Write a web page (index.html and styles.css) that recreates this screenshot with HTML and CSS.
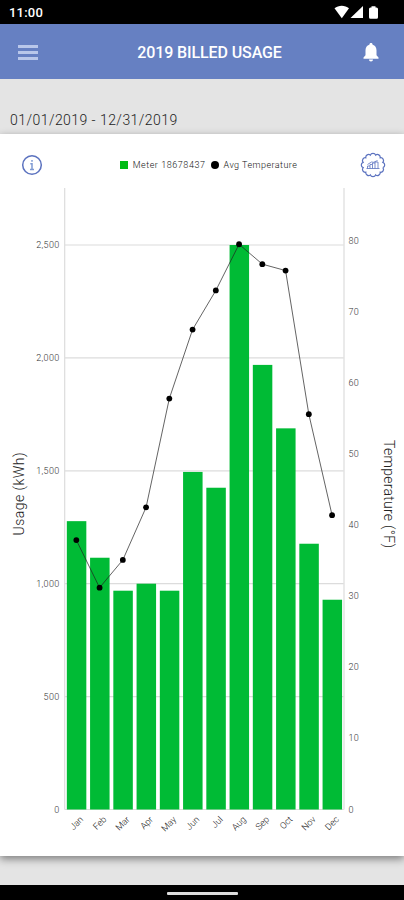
FILE: index.html
```html
<!DOCTYPE html>
<html lang="en">
<head>
  <meta charset="UTF-8" />
  <meta name="viewport" content="width=device-width, initial-scale=1.0"/>
  <title>2019 Billed Usage</title>
  <link rel="stylesheet" href="styles.css">
</head>
<body>
  <div class="status-bar">
    <span class="time">11:00</span>
    <svg class="status-icons" width="46" height="16" viewBox="0 0 46 16">
      <path d="M0.5 3.2C4.5-.2 11-.2 15 3.2L7.800 13.2Z"/>
      <path d="M29 1V13H16.5Z"/>
      <path d="M37.5 1.2h4v1.3h1q1.5 0 1.5 1.5v8.3q0 1.5-1.5 1.5h-6q-1.5 0-1.5-1.5V4q0-1.5 1.5-1.5h1Z"/>
    </svg>
  </div>

  <header class="app-bar">
    <div class="menu"><span></span><span></span><span></span></div>
    <h1>2019 BILLED USAGE</h1>
    <svg class="bell" width="16" height="19" viewBox="0 0 16 19">
      <path d="M8 0c1 0 1.6.7 1.6 1.7 2.6.7 3.9 2.8 3.9 5.6v5l2 2.2v1.3H.5v-1.3l2-2.2v-5c0-2.8 1.3-4.9 3.9-5.6C6.4.7 7 0 8 0ZM6 16.6h4c0 1.2-.8 2-2 2s-2-.8-2-2Z"/>
    </svg>
  </header>

  <div class="period">01/01/2019 - 12/31/2019</div>

  <main class="card">
    <div class="toolbar">
      <svg class="info" width="22" height="22" viewBox="0 0 22 22">
        <circle cx="11" cy="11" r="9.3"/>
        <path d="M11 6v1.7M9.3 9.8H11v5.4M9 15.5h4"/>
      </svg>
      <div class="legend">
        <span class="square"></span>
        <span class="meter">Meter 18678437</span>
        <span class="dot"></span>
        <span class="temp">Avg Temperature</span>
      </div>
      <svg class="badge" width="26" height="26" viewBox="0 0 26 26">
        <path id="badgeEdge" d=""/>
        <path class="thin" d="M7.500 16.500V14h2.500v2.500M10 14v-1.500h2.500v4M12.500 12.500V11H15v5.500M15 11v-1h3v6.500M6.500 16.500h13M7.500 12.500l4-2.500 2 .3 4-1.800"/>
      </svg>
    </div>
    <svg id="chart" class="chart" width="404" height="668" viewBox="0 0 404 668"></svg>
  </main>

  <footer class="nav-bar"><span></span></footer>

  <script>
    const chart = document.getElementById("chart");
    const months = ["Jan", "Feb", "Mar", "Apr", "May", "Jun", "Jul", "Aug", "Sep", "Oct", "Nov", "Dec"];
    const usage = [1277, 1115, 969, 1000, 969, 1495, 1425, 2500, 1969, 1688, 1177, 929];
    const temps = [37.9, 31.2, 35.1, 42.5, 57.8, 67.5, 73, 79.5, 76.7, 75.8, 55.6, 41.4];

    const left = 64.7, right = 343.7, bottom = 621.5;
    const slot = (right - left) / months.length;
    const usageY = v => bottom - v * 0.2258;
    const tempY = v => bottom - v * 7.11;
    const centerX = i => left + slot * (i + 0.5);

    function add(tag, attrs, text) {
      const el = document.createElementNS("http://www.w3.org/2000/svg", tag);
      for (const key in attrs) el.setAttribute(key, attrs[key]);
      if (text !== undefined) el.textContent = text;
      chart.appendChild(el);
    }

    // Grid and left axis
    for (let v = 0; v <= 2500; v += 500) {
      const y = usageY(v);
      add("line", { class: "grid", x1: left, x2: right, y1: y, y2: y });
      add("text", { class: "tick left", x: 59.5, y: y + 3 }, v.toLocaleString("en-US"));
    }
    add("line", { class: "grid", x1: left, x2: left, y1: 0, y2: bottom });
    add("line", { class: "grid", x1: right + 0.3, x2: right + 0.3, y1: 0, y2: bottom });

    // Right axis
    for (let v = 0; v <= 80; v += 10) {
      add("text", { class: "tick", x: 348.5, y: tempY(v) + 3 }, v);
    }

    // Bars and month names
    months.forEach((month, i) => {
      const x = centerX(i);
      const y = usageY(usage[i]);
      add("rect", { class: "bar", x: x - 9.5, y: y, width: 19.5, height: bottom - y });
      add("text", { class: "month", transform: `translate(${x + 7.5} 632) rotate(-45)` }, month);
    });

    // Temperature line
    add("polyline", { class: "line", points: temps.map((t, i) => `${centerX(i)},${tempY(t)}`).join(" ") });
    temps.forEach((t, i) => add("circle", { cx: centerX(i), cy: tempY(t), r: 2.9 }));

    // Axis titles
    add("text", { class: "axis-title", transform: "translate(24 306) rotate(-90)", textLength: 83 }, "Usage (kWh)");
    add("text", { class: "axis-title", transform: "translate(384 306) rotate(90)", textLength: 108 }, "Temperature (°F)");

    // Scalloped edge of the badge
    let edge = "";
    for (let i = 0; i <= 12; i++) {
      const a = i * Math.PI / 6 + Math.PI / 12;
      const x = (13 + 10.2 * Math.cos(a)).toFixed(2);
      const y = (13 + 10.2 * Math.sin(a)).toFixed(2);
      edge += i === 0 ? `M${x} ${y}` : `A2.8 2.8 0 0 1 ${x} ${y}`;
    }
    document.getElementById("badgeEdge").setAttribute("d", edge);
  </script>
</body>
</html>
```
FILE: styles.css
```css
* {
  box-sizing: border-box;
}
body {
  margin: 0;
  height: 900px;
  display: flex;
  flex-direction: column;
  overflow: hidden;
  background: #e4e4e4;
  font-family: Roboto, sans-serif;
}
.status-bar {
  height: 24px;
  flex: none;
  display: flex;
  justify-content: space-between;
  padding: 5px 24px 0 9px;
  background: #000;
  color: #fff;
}
.time {
  font-size: 13px;
  line-height: 16px;
  font-weight: 500;
  letter-spacing: 0.2px;
}
.status-icons {
  fill: #fff;
}
.app-bar {
  height: 55px;
  flex: none;
  display: grid;
  grid-template-columns: 60px 1fr 45px;
  align-items: center;
  padding: 1px 0 0 18px;
  background: #6680c2;
  color: #fff;
}
.menu {
  width: 20px;
  display: flex;
  flex-direction: column;
  gap: 3px;
}
.menu span {
  height: 3px;
  background: #b9c7ea;
}
h1 {
  margin: 0;
  padding: 2px 18px 0 0;
  text-align: center;
  font-size: 16px;
  font-weight: 500;
  line-height: 20px;
  letter-spacing: -0.1px;
}
.bell {
  margin-left: 4px;
  fill: #fff;
}
.period {
  height: 55px;
  flex: none;
  padding: 31px 10px 0;
  font-size: 14px;
  font-weight: 300;
  line-height: 20px;
  letter-spacing: 0.45px;
  color: #222;
}
.card {
  height: 722px;
  flex: none;
  background: #fff;
  box-shadow: 0 3px 8px rgba(0, 0, 0, 0.45);
}
.toolbar {
  height: 54px;
  display: flex;
  align-items: center;
  justify-content: space-between;
  padding: 8px 18px 0 21px;
}
.info, .badge {
  fill: none;
  stroke: #5b72bf;
  stroke-width: 1.5;
}
.info path {
  stroke: #7f9ad3;
}
.badge {
  stroke-width: 1.2;
}
.badge .thin {
  stroke-width: 0.8;
}
.legend {
  display: flex;
  align-items: center;
  margin-left: 14px;
  font-size: 9px;
  font-weight: 300;
  color: #111;
}
.square {
  width: 8px;
  height: 8px;
  margin-right: 5px;
  background: #00bb16;
}
.meter {
  letter-spacing: 0.55px;
}
.dot {
  width: 8px;
  height: 8px;
  margin: 0 5px;
  border-radius: 50%;
  background: #000;
}
.temp {
  letter-spacing: 0.45px;
}
.chart {
  display: block;
}
.grid {
  stroke: #dcdcdc;
  stroke-width: 1.2;
}
.tick {
  font-size: 9px;
  font-weight: 300;
  letter-spacing: 0.3px;
  fill: #333;
}
.left {
  text-anchor: end;
}
.month {
  font-size: 9px;
  font-weight: 300;
  text-anchor: end;
  fill: #222;
}
.bar {
  fill: #00bb35;
}
.line {
  fill: none;
  stroke: #222;
  stroke-opacity: 0.7;
  stroke-width: 1;
}
.axis-title {
  font-size: 14px;
  font-weight: 300;
  text-anchor: middle;
  fill: #222;
}
.nav-bar {
  height: 15px;
  flex: none;
  margin-top: auto;
  display: flex;
  justify-content: center;
  padding-top: 7px;
  background: #000;
}
.nav-bar span {
  width: 71px;
  height: 3px;
  border-radius: 1px;
  background: #ddd;
}
```
